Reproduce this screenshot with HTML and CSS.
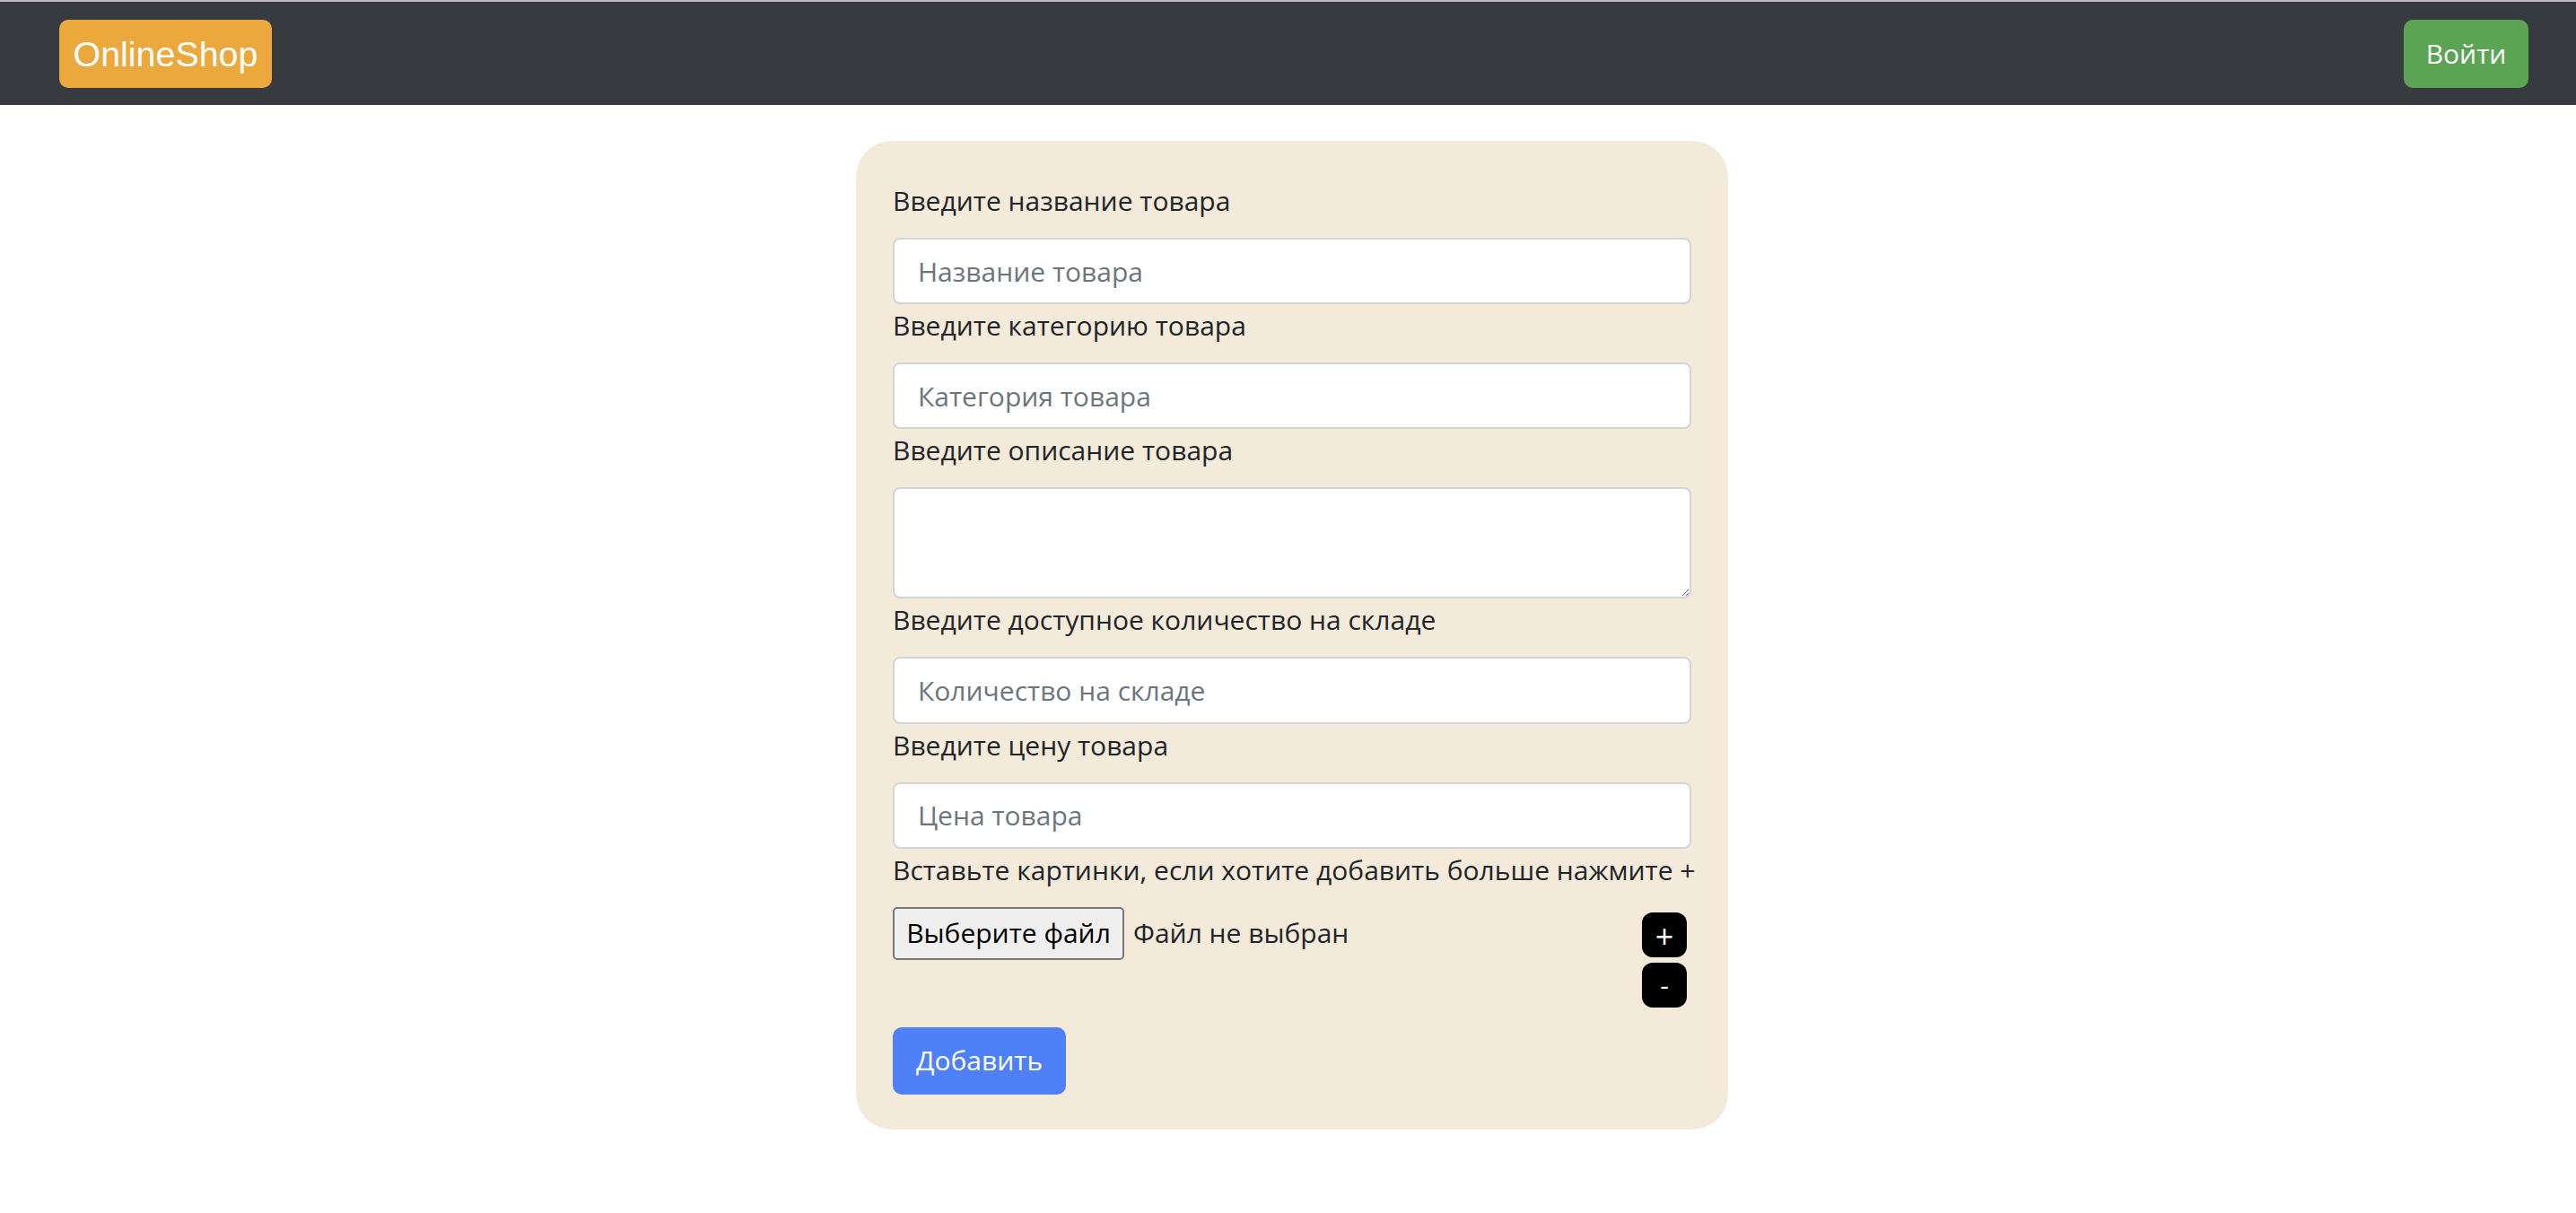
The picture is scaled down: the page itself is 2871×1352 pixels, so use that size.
FILE: index.html
```html
<!DOCTYPE html>
<html lang="ru">
<head>
<meta charset="utf-8">
<title>OnlineShop</title>
<link rel="stylesheet" href="styles.css">
</head>
<body>
<nav class="navbar">
  <a class="brand" href="#">OnlineShop</a>
  <button class="btn btn-login" type="button">Войти</button>
</nav>
<main class="page">
  <form class="card">
    <label class="form-label">Введите название товара</label>
    <input class="form-control" type="text" placeholder="Название товара">
    <label class="form-label">Введите категорию товара</label>
    <input class="form-control" type="text" placeholder="Категория товара">
    <label class="form-label">Введите описание товара</label>
    <textarea class="form-control textarea"></textarea>
    <label class="form-label">Введите доступное количество на складе</label>
    <input class="form-control" type="text" placeholder="Количество на складе">
    <label class="form-label">Введите цену товара</label>
    <input class="form-control" type="text" placeholder="Цена товара">
    <label class="form-label">Вставьте картинки, если хотите добавить больше нажмите +</label>
    <div class="files-row">
      <div class="file-input">
        <span class="file-btn">Выберите файл</span>
        <span class="file-status">Файл не выбран</span>
      </div>
      <div class="pm">
        <button class="pm-btn pm-plus" type="button">+</button>
        <button class="pm-btn" type="button">-</button>
      </div>
    </div>
    <button class="btn btn-add" type="button">Добавить</button>
  </form>
</main>
</body>
</html>
```
FILE: styles.css
```css
html, body {
  margin: 0;
  padding: 0;
  background: #ffffff;
}
body {
  font-family: "Open Sans", "Noto Sans", sans-serif;
  font-size: 30px;
  line-height: 48px;
  color: #212529;
}
.navbar {
  box-sizing: border-box;
  height: 117px;
  border-top: 2px solid #c5b9c1;
  background: #373a3f;
  display: flex;
  align-items: center;
  justify-content: space-between;
  padding: 0 53px 0 66px;
}
.brand {
  box-sizing: border-box;
  height: 76px;
  width: 237px;
  display: flex;
  align-items: center;
  justify-content: center;
  background: #eba93d;
  border-radius: 10px;
  color: #ffffff;
  text-decoration: none;
  font-family: "Liberation Sans", Arial, sans-serif;
  font-size: 39.4px;
}
.btn {
  box-sizing: border-box;
  border: none;
  height: 76px;
  border-radius: 10px;
  color: #ffffff;
  font-family: inherit;
  font-size: 30px;
  line-height: 48px;
  padding: 0 24px;
  cursor: pointer;
}
.btn-login {
  width: 139px;
  background: #5ba454;
}
.page {
  display: flex;
  justify-content: center;
  padding-top: 40px;
  padding-left: 9px;
}
.card {
  box-sizing: border-box;
  width: 972px;
  height: 1102px;
  background: #f3eada;
  border-radius: 40px;
  padding: 43px 41px 39px;
  display: flex;
  flex-direction: column;
  align-items: stretch;
}
.form-label {
  display: block;
  margin-bottom: 17px;
  white-space: nowrap;
}
.form-control {
  box-sizing: border-box;
  height: 75px;
  border: 2px solid #d2d4d8;
  border-radius: 8px;
  background: #ffffff;
  padding: 0 26px;
  font-family: inherit;
  font-size: 30px;
  color: #212529;
  outline: none;
  margin: 0;
}
.form-control::placeholder {
  color: #6c757d;
}
.textarea {
  height: 125px;
  resize: vertical;
  padding: 12px 26px;
}
.files-row {
  display: flex;
  justify-content: space-between;
  align-items: flex-start;
}
.file-input {
  display: flex;
  align-items: center;
}
.file-btn {
  box-sizing: border-box;
  height: 59px;
  width: 258px;
  display: flex;
  align-items: center;
  justify-content: center;
  background: #efefef;
  border: 2px solid #767676;
  border-radius: 5px;
  color: #000000;
  margin-right: 10px;
}
.file-status {
  color: #212529;
}
.pm {
  display: flex;
  flex-direction: column;
  gap: 6px;
  margin-top: 6px;
  margin-right: 5px;
}
.pm-btn {
  box-sizing: border-box;
  width: 50px;
  height: 50px;
  border: none;
  border-radius: 12px;
  background: #000000;
  color: #ffffff;
  font-family: inherit;
  font-size: 30px;
  line-height: 50px;
  padding: 0;
}
.pm-plus {
  font-size: 36px;
  line-height: 54px;
}
.btn-add {
  align-self: flex-start;
  margin-top: 22px;
  width: 193px;
  background: #4e80f7;
}
```
